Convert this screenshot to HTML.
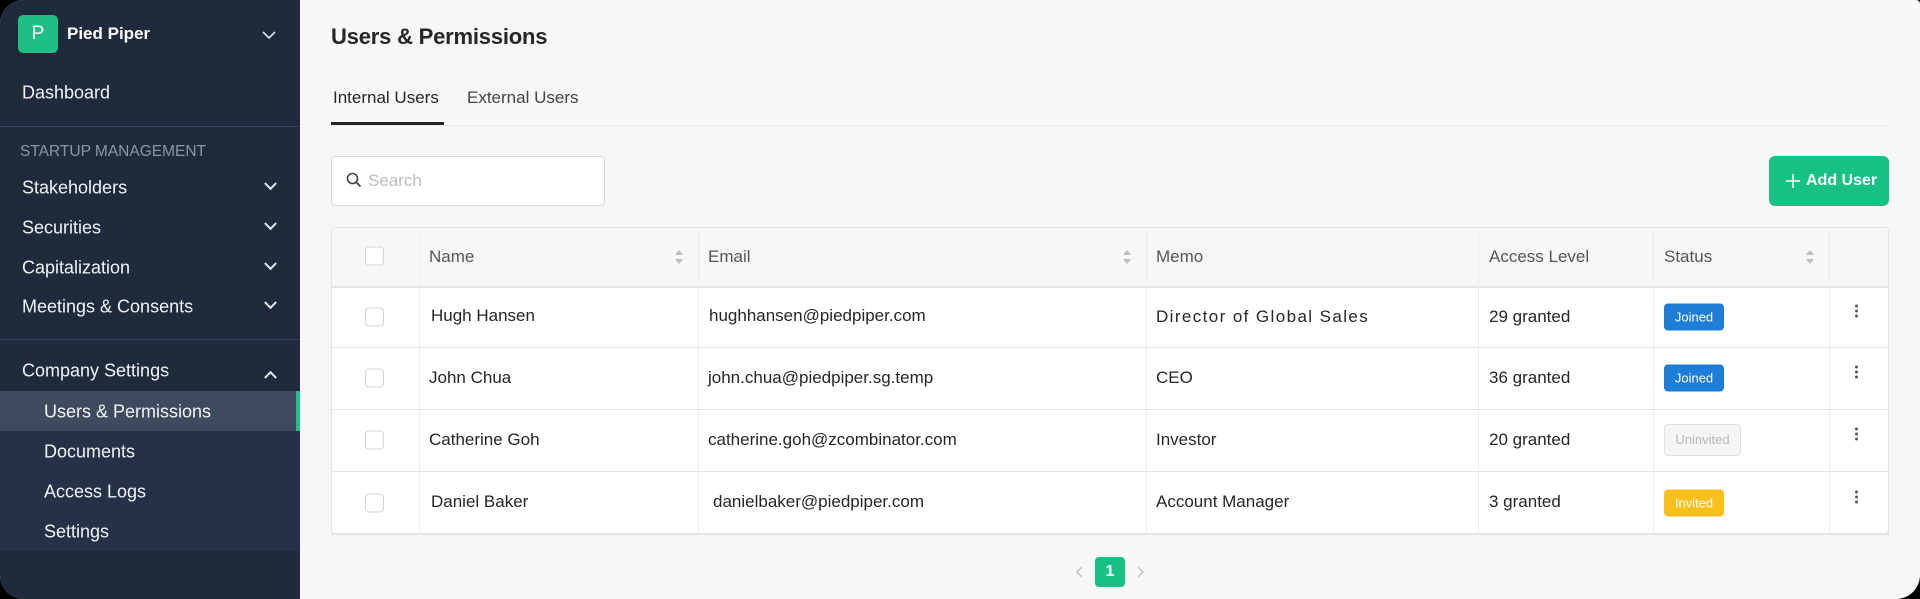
<!DOCTYPE html>
<html><head><meta charset="utf-8"><style>
*{box-sizing:border-box;margin:0;padding:0}
html,body{width:1920px;height:599px;background:#000;overflow:hidden}
body{font-family:"Liberation Sans",sans-serif;position:relative}
.win{position:absolute;left:0;top:0;width:1920px;height:599px;border-radius:24px 4px 24px 24px;overflow:hidden;background:#f7f7f7}
.side{position:absolute;left:0;top:0;width:300px;height:599px;background:#1f2a3d;color:#fff}
.abs{position:absolute}
.si{position:absolute;left:22px;font-size:18px;color:#f2f4f7;transform:translateY(-50%)}
.sub{left:44px}
.chev{position:absolute;left:266px;width:9px;height:9px;border-right:2px solid #e6e9ee;border-bottom:2px solid #e6e9ee;transform:translateY(-75%) rotate(45deg)}
.hr{position:absolute;left:0;width:300px;height:1px;background:#36425a}
.t{position:absolute;transform:translateY(-50%);white-space:nowrap}
.cell{position:absolute;font-size:17px;color:#262626;transform:translateY(-50%);white-space:nowrap}
.cb{position:absolute;left:365px;width:19px;height:19px;border:1px solid #d4d4d4;border-radius:4px;background:#fff;transform:translateY(-50%)}
.vl{position:absolute;top:227px;height:307px;width:1px;background:#ececec}
.hl{position:absolute;left:331px;width:1558px;height:1px;background:#e4e4e4}
.badge{position:absolute;left:1664px;height:27px;border-radius:4px;font-size:13px;color:#fff;text-align:center;line-height:27px;transform:translateY(-50%)}
.keb{position:absolute;left:1855px;width:3px;transform:translateY(-50%)}
.keb i{display:block;width:3px;height:3px;border-radius:50%;background:#555;margin:2px 0}
.sort{position:absolute;transform:translateY(-50%)}
</style></head><body><div class="win">
<div class="side">
 <div class="abs" style="left:18px;top:15px;width:40px;height:38px;border-radius:5px;background:#1fbf84;color:#fff;font-size:19px;text-align:center;line-height:38px">P</div>
 <div class="t" style="left:67px;top:34px;font-size:17px;font-weight:bold;color:#fff">Pied Piper</div>
 <svg class="abs" style="left:262px;top:30px" width="14" height="10" viewBox="0 0 14 10"><path d="M1 2l6 6 6-6" stroke="#dfe3ea" stroke-width="1.6" fill="none"/></svg>
 <div class="si" style="top:93px">Dashboard</div>
 <div class="hr" style="top:126px"></div>
 <div class="si" style="top:152px;left:20px;font-size:15.5px;color:#8d96a6">STARTUP MANAGEMENT</div>
 <div class="si" style="top:188px">Stakeholders</div><div class="chev" style="top:186px"></div>
 <div class="si" style="top:228px">Securities</div><div class="chev" style="top:226px"></div>
 <div class="si" style="top:268px">Capitalization</div><div class="chev" style="top:266px"></div>
 <div class="si" style="top:307px">Meetings &amp; Consents</div><div class="chev" style="top:305px"></div>
 <div class="hr" style="top:339px"></div>
 <div class="si" style="top:371px">Company Settings</div>
 <div class="chev" style="top:375px;transform:translateY(-25%) rotate(225deg)"></div>
 <div class="abs" style="left:0;top:431px;width:300px;height:120px;background:#243147"></div>
 <div class="abs" style="left:0;top:391px;width:300px;height:40px;background:#3e4a5d"></div>
 <div class="abs" style="left:296px;top:391px;width:4px;height:40px;background:#1fc08a"></div>
 <div class="si sub" style="top:412px">Users &amp; Permissions</div>
 <div class="si sub" style="top:452px">Documents</div>
 <div class="si sub" style="top:492px">Access Logs</div>
 <div class="si sub" style="top:532px">Settings</div>
</div>
<div class="t" style="left:331px;top:37px;font-size:22px;font-weight:bold;color:#262626;letter-spacing:-0.2px">Users &amp; Permissions</div>
<div class="t" style="left:333px;top:98px;font-size:17px;color:#262626">Internal Users</div>
<div class="t" style="left:467px;top:98px;font-size:17px;color:#444">External Users</div>
<div class="abs" style="left:331px;top:125px;width:1558px;height:1px;background:#ebebeb"></div>
<div class="abs" style="left:331px;top:122px;width:113px;height:3px;background:#262626"></div>
<div class="abs" style="left:331px;top:156px;width:274px;height:50px;border:1px solid #d9d9d9;border-radius:4px;background:#fff"></div>
<svg class="abs" style="left:346px;top:172px" width="16" height="16" viewBox="0 0 16 16"><circle cx="6.5" cy="6.5" r="5" stroke="#444" stroke-width="1.6" fill="none"/><path d="M10 10l4.5 4.5" stroke="#444" stroke-width="1.8"/></svg>
<div class="t" style="left:368px;top:181px;font-size:17px;color:#bdbdbd">Search</div>
<div class="abs" style="left:1769px;top:156px;width:120px;height:50px;border-radius:6px;background:#17c083"></div>
<svg class="abs" style="left:1786px;top:174px" width="14" height="14" viewBox="0 0 14 14"><path d="M7 0v14M0 7h14" stroke="#fff" stroke-width="1.6"/></svg>
<div class="t" style="left:1806px;top:181px;font-size:16px;font-weight:bold;color:#fff">Add User</div>

<div class="abs" style="left:331px;top:227px;width:1558px;height:307px;border:1px solid #e2e2e2;border-radius:4px;background:#fff"></div>
<div class="abs" style="left:332px;top:228px;width:1556px;height:58px;background:#f7f7f7"></div>
<div class="hl" style="top:286px;height:2px"></div><div class="hl" style="top:347px"></div><div class="hl" style="top:409px"></div><div class="hl" style="top:471px"></div><div class="hl" style="top:533px;height:2px"></div>
<div class="vl" style="left:419px"></div><div class="vl" style="left:698px"></div><div class="vl" style="left:1146px"></div><div class="vl" style="left:1478px"></div><div class="vl" style="left:1653px"></div><div class="vl" style="left:1829px"></div>
<div class="cb" style="top:256px"></div><div class="cb" style="top:317px"></div><div class="cb" style="top:378px"></div><div class="cb" style="top:440px"></div><div class="cb" style="top:503px"></div>
<div class="cell" style="left:429px;top:257px;color:#555">Name</div>
<div class="cell" style="left:708px;top:257px;color:#555">Email</div>
<div class="cell" style="left:1156px;top:257px;color:#555">Memo</div>
<div class="cell" style="left:1489px;top:257px;color:#555">Access Level</div>
<div class="cell" style="left:1664px;top:257px;color:#555">Status</div>
<svg class="sort" style="left:674px;top:257px" width="10" height="16" viewBox="0 0 10 16"><path d="M5 1l4 5H1zM5 15l4-5H1z" fill="#bfbfbf"/></svg>
<svg class="sort" style="left:1122px;top:257px" width="10" height="16" viewBox="0 0 10 16"><path d="M5 1l4 5H1zM5 15l4-5H1z" fill="#bfbfbf"/></svg>
<svg class="sort" style="left:1805px;top:257px" width="10" height="16" viewBox="0 0 10 16"><path d="M5 1l4 5H1zM5 15l4-5H1z" fill="#bfbfbf"/></svg>

<div class="cell" style="left:431px;top:316px">Hugh Hansen</div>
<div class="cell" style="left:709px;top:316px">hughhansen@piedpiper.com</div>
<div class="cell" style="left:1156px;top:317px;letter-spacing:1.4px">Director of Global Sales</div>
<div class="cell" style="left:1489px;top:317px">29 granted</div>
<div class="badge" style="top:317px;width:60px;background:#1e7dd6">Joined</div>
<div class="keb" style="top:311px"><i></i><i></i><i></i></div>

<div class="cell" style="left:429px;top:378px">John Chua</div>
<div class="cell" style="left:708px;top:378px">john.chua@piedpiper.sg.temp</div>
<div class="cell" style="left:1156px;top:378px">CEO</div>
<div class="cell" style="left:1489px;top:378px">36 granted</div>
<div class="badge" style="top:378px;width:60px;background:#1e7dd6">Joined</div>
<div class="keb" style="top:372px"><i></i><i></i><i></i></div>

<div class="cell" style="left:429px;top:440px">Catherine Goh</div>
<div class="cell" style="left:708px;top:440px">catherine.goh@zcombinator.com</div>
<div class="cell" style="left:1156px;top:440px">Investor</div>
<div class="cell" style="left:1489px;top:440px">20 granted</div>
<div class="badge" style="top:440px;width:77px;height:32px;line-height:30px;background:#f5f5f5;border:1px solid #e0e0e0;color:#b5b5b5">Uninvited</div>
<div class="keb" style="top:434px"><i></i><i></i><i></i></div>

<div class="cell" style="left:431px;top:502px">Daniel Baker</div>
<div class="cell" style="left:713px;top:502px">danielbaker@piedpiper.com</div>
<div class="cell" style="left:1156px;top:502px">Account Manager</div>
<div class="cell" style="left:1489px;top:502px">3 granted</div>
<div class="badge" style="top:503px;width:60px;background:#fbbf1a">Invited</div>
<div class="keb" style="top:497px"><i></i><i></i><i></i></div>

<svg class="abs" style="left:1075px;top:566px" width="8" height="12" viewBox="0 0 8 12"><path d="M7 1L2 6l5 5" stroke="#c4c4c4" stroke-width="1.5" fill="none"/></svg>
<div class="abs" style="left:1095px;top:557px;width:30px;height:30px;border-radius:4px;background:#17c083;color:#fff;font-weight:bold;font-size:16px;text-align:center;line-height:30px">1</div>
<svg class="abs" style="left:1137px;top:566px" width="8" height="12" viewBox="0 0 8 12"><path d="M1 1l5 5-5 5" stroke="#c4c4c4" stroke-width="1.5" fill="none"/></svg>
</div></body></html>
